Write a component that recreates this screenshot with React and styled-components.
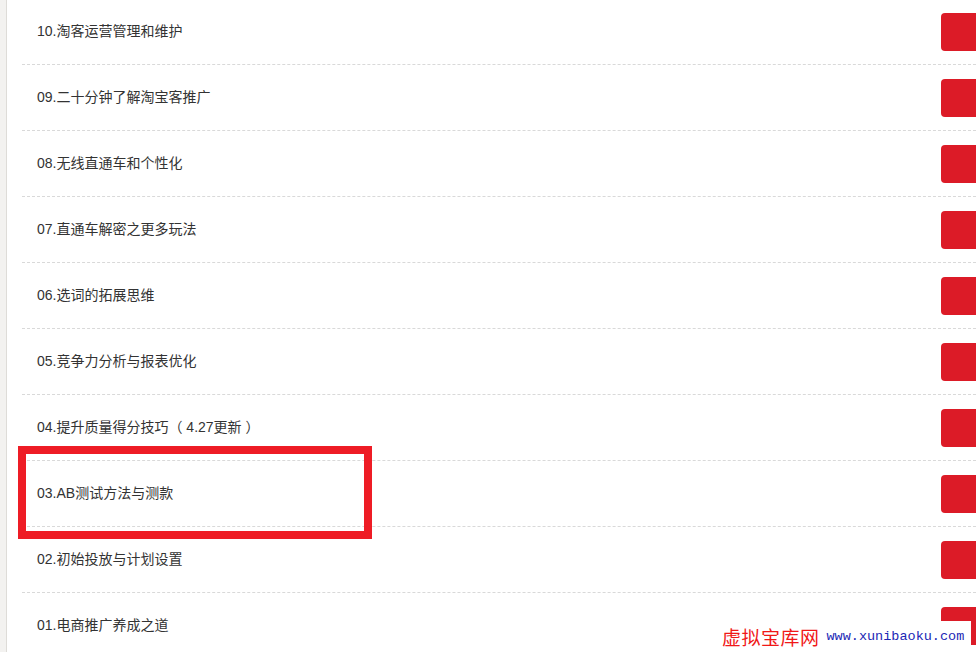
import React from 'react';
import styled, { createGlobalStyle } from 'styled-components';

const lessons = [
  '10.淘客运营管理和维护',
  '09.二十分钟了解淘宝客推广',
  '08.无线直通车和个性化',
  '07.直通车解密之更多玩法',
  '06.选词的拓展思维',
  '05.竞争力分析与报表优化',
  '04.提升质量得分技巧（ 4.27更新 ）',
  '03.AB测试方法与测款',
  '02.初始投放与计划设置',
  '01.电商推广养成之道',
];

const GlobalStyle = createGlobalStyle`
  html, body {
    margin: 0;
    padding: 0;
    background: #fff;
    overflow: hidden;
  }
`;

const Page = styled.div`
  position: relative;
  display: flex;
  width: 976px;
  height: 652px;
  overflow: hidden;
  font-family: "Liberation Sans", "Noto Sans CJK SC", sans-serif;
`;

const Strip = styled.div`
  width: 6px;
  flex-shrink: 0;
  background: #f3f2f0;
  border-right: 1px solid #dedcd8;
`;

const List = styled.ul`
  flex: 1;
  list-style: none;
  margin: -1px 0 0 15px;
  padding: 0;
`;

const Row = styled.li`
  display: flex;
  align-items: center;
  justify-content: space-between;
  height: 65px;
  padding-left: 15px;
  border-bottom: 1px dashed #d9d9d9;
`;

const Title = styled.span`
  font-size: 14px;
  line-height: 20px;
  color: #333;
  margin-bottom: 2px;
`;

const PlayButton = styled.button`
  width: 35px;
  height: 38px;
  border: none;
  border-radius: 4px 0 0 4px;
  background: #dc1b27;
  cursor: pointer;
  margin-top: 1px;
`;

const Highlight = styled.div`
  position: absolute;
  left: 18px;
  top: 446px;
  width: 354px;
  height: 93px;
  box-sizing: border-box;
  border: 8px solid #ee1c25;
  pointer-events: none;
`;

const Watermark = styled.div`
  position: absolute;
  left: 718px;
  top: 621px;
  width: 253px;
  height: 31px;
  background: #fff;
  display: flex;
  align-items: center;
  gap: 7px;
  padding-left: 4px;
  box-sizing: border-box;
`;

const MarkName = styled.span`
  font-family: "Noto Sans CJK SC", sans-serif;
  font-size: 19px;
  color: #f01818;
  letter-spacing: 0.5px;
`;

const MarkUrl = styled.span`
  font-family: "Liberation Mono", monospace;
  font-size: 13.5px;
  color: #1c27b5;
`;

export default function App() {
  return (
    <Page>
      <GlobalStyle />
      <Strip />
      <List>
        {lessons.map((name) => (
          <Row key={name}>
            <Title>{name}</Title>
            <PlayButton aria-label="播放" />
          </Row>
        ))}
      </List>
      <Highlight />
      <Watermark>
        <MarkName>虚拟宝库网</MarkName>
        <MarkUrl>www.xunibaoku.com</MarkUrl>
      </Watermark>
    </Page>
  );
}
